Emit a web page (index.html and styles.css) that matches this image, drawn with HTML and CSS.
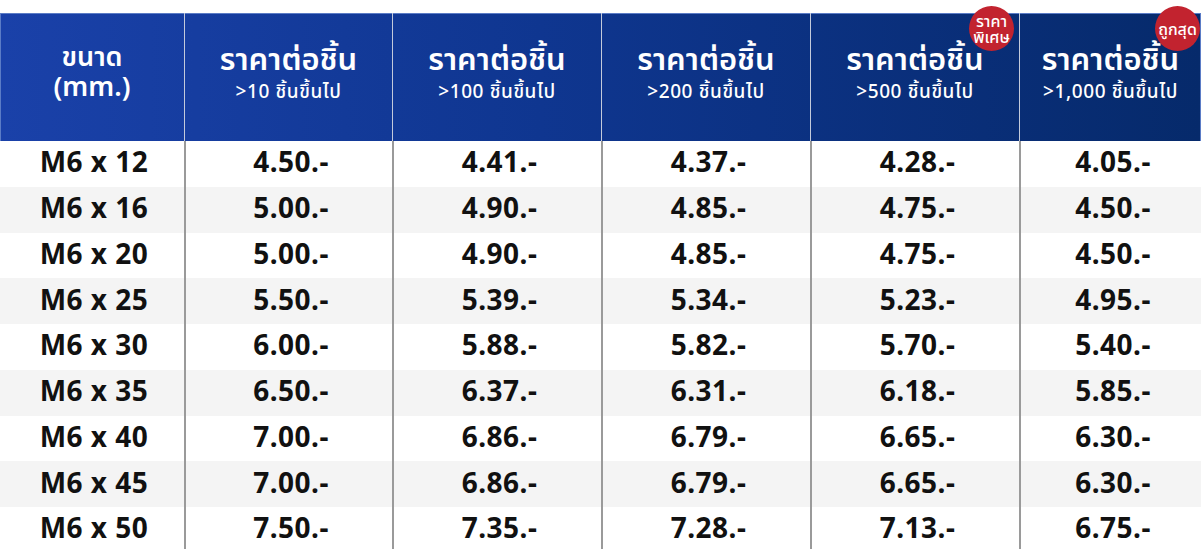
FILE: index.html
```html
<!DOCTYPE html>
<html lang="th">
<head>
<meta charset="utf-8">
<link rel="stylesheet" href="styles.css">
</head>
<body>
<div class="table">
  <div class="head">
    <div class="hcell size"><span class="t1">ขนาด</span><span class="t1">(mm.)</span></div>
    <div class="hcell"><span class="t1">ราคาต่อชิ้น</span><span class="t2">&gt;10 ชิ้นขึ้นไป</span></div>
    <div class="hcell"><span class="t1">ราคาต่อชิ้น</span><span class="t2">&gt;100 ชิ้นขึ้นไป</span></div>
    <div class="hcell"><span class="t1">ราคาต่อชิ้น</span><span class="t2">&gt;200 ชิ้นขึ้นไป</span></div>
    <div class="hcell"><span class="t1">ราคาต่อชิ้น</span><span class="t2">&gt;500 ชิ้นขึ้นไป</span><span class="badge b1">ราคา<br>พิเศษ</span></div>
    <div class="hcell"><span class="t1">ราคาต่อชิ้น</span><span class="t2">&gt;1,000 ชิ้นขึ้นไป</span><span class="badge b2">ถูกสุด</span></div>
  </div>
  <div class="row"><div>M6 x 12</div><div>4.50.-</div><div>4.41.-</div><div>4.37.-</div><div>4.28.-</div><div>4.05.-</div></div>
  <div class="row alt"><div>M6 x 16</div><div>5.00.-</div><div>4.90.-</div><div>4.85.-</div><div>4.75.-</div><div>4.50.-</div></div>
  <div class="row"><div>M6 x 20</div><div>5.00.-</div><div>4.90.-</div><div>4.85.-</div><div>4.75.-</div><div>4.50.-</div></div>
  <div class="row alt"><div>M6 x 25</div><div>5.50.-</div><div>5.39.-</div><div>5.34.-</div><div>5.23.-</div><div>4.95.-</div></div>
  <div class="row"><div>M6 x 30</div><div>6.00.-</div><div>5.88.-</div><div>5.82.-</div><div>5.70.-</div><div>5.40.-</div></div>
  <div class="row alt"><div>M6 x 35</div><div>6.50.-</div><div>6.37.-</div><div>6.31.-</div><div>6.18.-</div><div>5.85.-</div></div>
  <div class="row"><div>M6 x 40</div><div>7.00.-</div><div>6.86.-</div><div>6.79.-</div><div>6.65.-</div><div>6.30.-</div></div>
  <div class="row alt"><div>M6 x 45</div><div>7.00.-</div><div>6.86.-</div><div>6.79.-</div><div>6.65.-</div><div>6.30.-</div></div>
  <div class="row"><div>M6 x 50</div><div>7.50.-</div><div>7.35.-</div><div>7.28.-</div><div>7.13.-</div><div>6.75.-</div></div>
</div>
</body>
</html>
```
FILE: styles.css
```css
html, body {
  margin: 0;
  padding: 0;
  background: #ffffff;
  overflow: hidden;
}
body {
  font-family: "Noto Sans", "Noto Sans Thai", "Loma", "Garuda", sans-serif;
  padding-top: 13px;
}
.table {
  width: 1201px;
}
.head,
.row {
  display: grid;
  grid-template-columns: 184px 208px 209px 209px 209px 182px;
}
.head {
  height: 128px;
  background: linear-gradient(90deg, #1a41a9 0%, #0f3690 45%, #062a6b 100%);
  box-shadow: inset 0 1px 0 #5b7cc6, inset 1px 0 0 #5b7cc6, inset -1px 0 0 #5b7cc6;
}
.hcell {
  position: relative;
  display: flex;
  flex-direction: column;
  align-items: center;
  justify-content: center;
  color: #ffffff;
  border-left: 1px solid #c3cadb;
  padding-bottom: 9px;
}
.hcell:first-child {
  border-left: none;
}
.hcell .t1 {
  font-size: 31px;
  font-weight: 600;
  line-height: 32px;
  margin-bottom: 5px;
}
.hcell .t2 {
  font-size: 19px;
  font-weight: 500;
  letter-spacing: 0.6px;
  line-height: 24px;
}
.hcell.size {
  padding-bottom: 12px;
}
.size .t1 {
  font-size: 27px;
  line-height: 30px;
  margin-bottom: 0;
}
.badge {
  position: absolute;
  top: -7px;
  width: 45px;
  height: 45px;
  border-radius: 50%;
  background: #c2232f;
  color: #ffffff;
  display: flex;
  align-items: center;
  justify-content: center;
  text-align: center;
  font-size: 16px;
  font-weight: 500;
  line-height: 16px;
}
.b1 { right: 5px; }
.b2 { right: 1px; }
.row {
  height: 45.75px;
}
.row.alt {
  background: #f4f4f4;
}
.row > div {
  display: flex;
  align-items: center;
  justify-content: center;
  padding-left: 4px;
  padding-bottom: 5px;
  font-size: 28px;
  font-weight: 700;
  letter-spacing: 0.5px;
  color: #111111;
  border-left: 2px solid #9a9a9a;
}
.row > div:first-child {
  border-left: none;
}
```
